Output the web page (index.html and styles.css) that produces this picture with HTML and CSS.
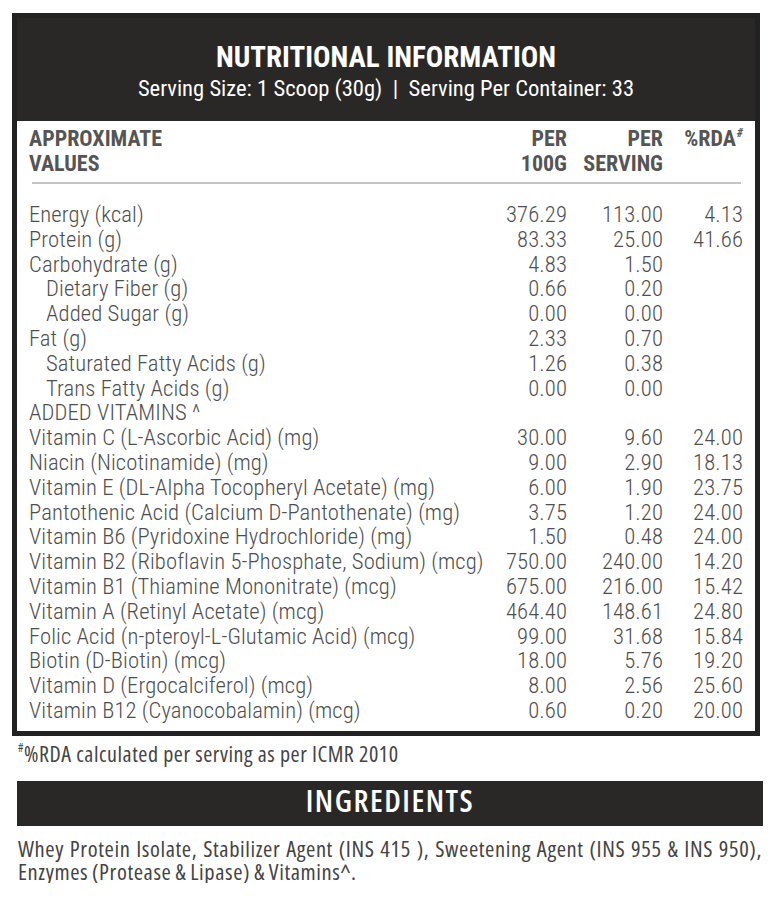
FILE: index.html
```html
<!DOCTYPE html>
<html lang="en">
<head>
<meta charset="utf-8">
<title>Nutritional Information</title>
<link rel="stylesheet" href="styles.css">
</head>
<body>
<div class="panel">
  <div class="panel-head">
    <div class="panel-title">NUTRITIONAL INFORMATION</div>
    <div class="panel-sub">Serving Size: 1 Scoop (30g)&nbsp; | &nbsp;Serving Per Container: 33</div>
  </div>
  <div class="panel-body">
    <div class="row row-head">
      <div class="cell-label">APPROXIMATE<br>VALUES</div>
      <div class="cell-num">PER<br>100G</div>
      <div class="cell-num">PER<br>SERVING</div>
      <div class="cell-num">%RDA<sup class="hash">#</sup></div>
    </div>
    <div class="rule"></div>
    <div class="rows">
      <div class="row"><div class="cell-label">Energy (kcal)</div><div class="cell-num">376.29</div><div class="cell-num">113.00</div><div class="cell-num">4.13</div></div>
      <div class="row"><div class="cell-label">Protein (g)</div><div class="cell-num">83.33</div><div class="cell-num">25.00</div><div class="cell-num">41.66</div></div>
      <div class="row"><div class="cell-label">Carbohydrate (g)</div><div class="cell-num">4.83</div><div class="cell-num">1.50</div><div class="cell-num"></div></div>
      <div class="row"><div class="cell-label sub">Dietary Fiber (g)</div><div class="cell-num">0.66</div><div class="cell-num">0.20</div><div class="cell-num"></div></div>
      <div class="row"><div class="cell-label sub">Added Sugar (g)</div><div class="cell-num">0.00</div><div class="cell-num">0.00</div><div class="cell-num"></div></div>
      <div class="row"><div class="cell-label">Fat (g)</div><div class="cell-num">2.33</div><div class="cell-num">0.70</div><div class="cell-num"></div></div>
      <div class="row"><div class="cell-label sub">Saturated Fatty Acids (g)</div><div class="cell-num">1.26</div><div class="cell-num">0.38</div><div class="cell-num"></div></div>
      <div class="row"><div class="cell-label sub">Trans Fatty Acids (g)</div><div class="cell-num">0.00</div><div class="cell-num">0.00</div><div class="cell-num"></div></div>
      <div class="row"><div class="cell-label">ADDED VITAMINS ^</div><div class="cell-num"></div><div class="cell-num"></div><div class="cell-num"></div></div>
      <div class="row"><div class="cell-label">Vitamin C (L-Ascorbic Acid) (mg)</div><div class="cell-num">30.00</div><div class="cell-num">9.60</div><div class="cell-num">24.00</div></div>
      <div class="row"><div class="cell-label">Niacin (Nicotinamide) (mg)</div><div class="cell-num">9.00</div><div class="cell-num">2.90</div><div class="cell-num">18.13</div></div>
      <div class="row"><div class="cell-label">Vitamin E (DL-Alpha Tocopheryl Acetate) (mg)</div><div class="cell-num">6.00</div><div class="cell-num">1.90</div><div class="cell-num">23.75</div></div>
      <div class="row"><div class="cell-label">Pantothenic Acid (Calcium D-Pantothenate) (mg)</div><div class="cell-num">3.75</div><div class="cell-num">1.20</div><div class="cell-num">24.00</div></div>
      <div class="row"><div class="cell-label">Vitamin B6 (Pyridoxine Hydrochloride) (mg)</div><div class="cell-num">1.50</div><div class="cell-num">0.48</div><div class="cell-num">24.00</div></div>
      <div class="row"><div class="cell-label">Vitamin B2 (Riboflavin 5-Phosphate, Sodium) (mcg)</div><div class="cell-num">750.00</div><div class="cell-num">240.00</div><div class="cell-num">14.20</div></div>
      <div class="row"><div class="cell-label">Vitamin B1 (Thiamine Mononitrate) (mcg)</div><div class="cell-num">675.00</div><div class="cell-num">216.00</div><div class="cell-num">15.42</div></div>
      <div class="row"><div class="cell-label">Vitamin A (Retinyl Acetate) (mcg)</div><div class="cell-num">464.40</div><div class="cell-num">148.61</div><div class="cell-num">24.80</div></div>
      <div class="row"><div class="cell-label">Folic Acid (n-pteroyl-L-Glutamic Acid) (mcg)</div><div class="cell-num">99.00</div><div class="cell-num">31.68</div><div class="cell-num">15.84</div></div>
      <div class="row"><div class="cell-label">Biotin (D-Biotin) (mcg)</div><div class="cell-num">18.00</div><div class="cell-num">5.76</div><div class="cell-num">19.20</div></div>
      <div class="row"><div class="cell-label">Vitamin D (Ergocalciferol) (mcg)</div><div class="cell-num">8.00</div><div class="cell-num">2.56</div><div class="cell-num">25.60</div></div>
      <div class="row"><div class="cell-label">Vitamin B12 (Cyanocobalamin) (mcg)</div><div class="cell-num">0.60</div><div class="cell-num">0.20</div><div class="cell-num">20.00</div></div>
    </div>
  </div>
</div>
<p class="footnote"><sup class="fn-hash">#</sup>%RDA calculated per serving as per ICMR 2010</p>
<div class="ing-bar">INGREDIENTS</div>
<p class="ing-text">Whey Protein Isolate, Stabilizer Agent (INS 415 ), Sweetening Agent (INS 955 &amp; INS 950), Enzymes (Protease &amp; Lipase) &amp; Vitamins^.</p>
</body>
</html>
```
FILE: styles.css
```css
* { box-sizing: border-box; }
html, body { margin: 0; padding: 0; background: #ffffff; }
body { width: 772px; padding-top: 13px; }

.panel {
  margin: 0 12px;
  border: 5px solid #232222;
  font-family: "Roboto Condensed", "Roboto", "Liberation Sans Narrow", sans-serif;
  font-stretch: condensed;
}
.panel-head {
  background: #2a2827;
  color: #ffffff;
  text-align: center;
  padding: 22px 0 17px;
}
.panel-title {
  font-size: 29px;
  font-weight: 700;
  line-height: 34px;
}
.panel-sub {
  font-size: 22.6px;
  font-weight: 400;
  line-height: 30px;
}
.panel-body {
  padding: 5px 12px 7px 12px;
  color: #4e4e4e;
}
.row {
  display: grid;
  grid-template-columns: 1fr 80px 96px 80px;
  font-size: 22.6px;
  font-weight: 300;
  line-height: 24.8px;
  letter-spacing: 0.12px;
}
.row-head {
  font-size: 22px;
  font-weight: 700;
  line-height: 25px;
  letter-spacing: 0;
  color: #555555;
}
.cell-label { white-space: nowrap; }
.cell-label.sub { padding-left: 17px; }
.cell-num { text-align: right; white-space: nowrap; }
.hash {
  font-size: 12px;
  font-style: italic;
  vertical-align: top;
  line-height: 14px;
  margin-left: 1px;
}
.rule {
  height: 2px;
  background: #c4c4c4;
  margin: 6px 2px 19px 3px;
}
.footnote {
  margin: 4px 0 0 18px;
  font-family: "Open Sans", "Noto Sans", sans-serif;
  font-stretch: 75%;
  font-size: 22px;
  line-height: 26px;
  letter-spacing: 0.55px;
  color: #444444;
}
.fn-hash {
  font-size: 12px;
  vertical-align: top;
  line-height: 16px;
}
.ing-bar {
  margin: 15px 9px 0 17px;
  height: 45px;
  background: #2a2827;
  color: #ffffff;
  text-align: center;
  font-family: "Open Sans", "Noto Sans", sans-serif;
  font-stretch: 75%;
  font-weight: 600;
  font-size: 31px;
  letter-spacing: 1.5px;
  line-height: 39px;
}
.ing-text {
  margin: 11px 10px 0 18px;
  font-family: "Open Sans", "Noto Sans", sans-serif;
  font-stretch: 75%;
  font-size: 22.5px;
  line-height: 23px;
  letter-spacing: 0.6px;
  word-spacing: -1px;
  text-align: justify;
  color: #444444;
}
```
